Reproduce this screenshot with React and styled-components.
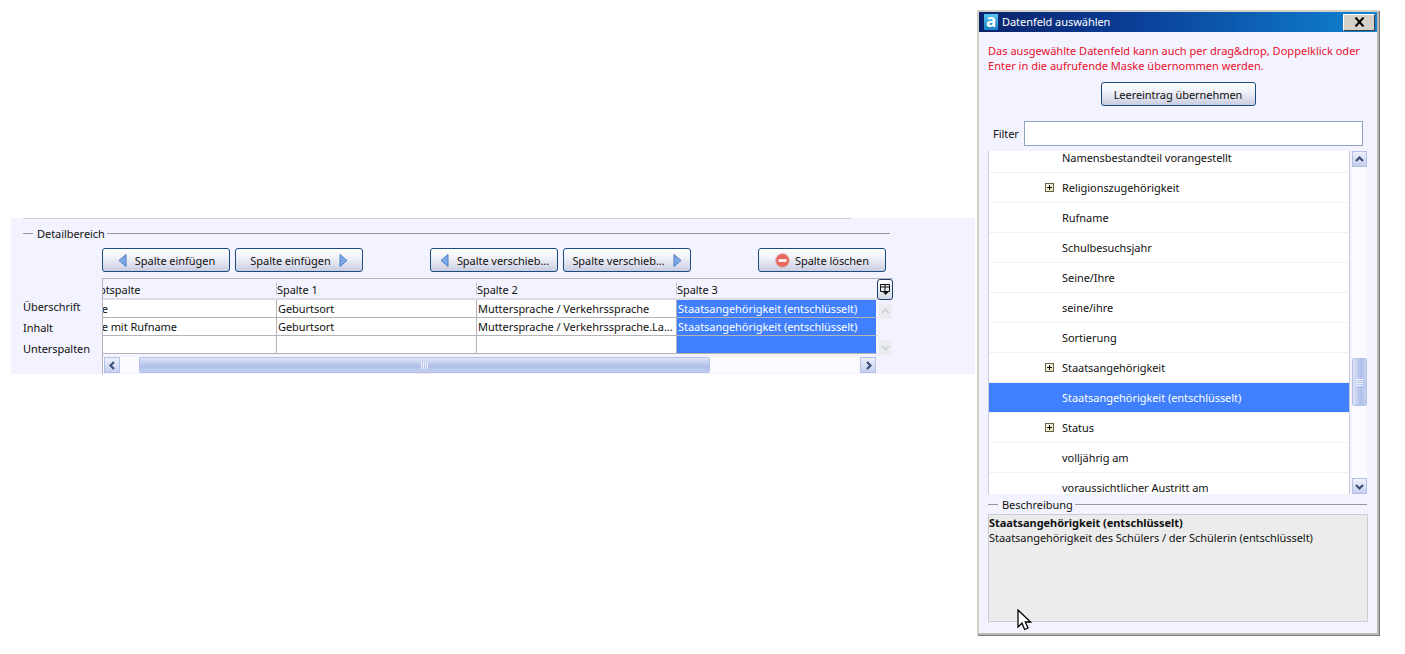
import React from "react";
import styled, { createGlobalStyle } from "styled-components";

const listItems = [
  { label: "Namensbestandteil vorangestellt" },
  { label: "Religionszugehörigkeit", expandable: true },
  { label: "Rufname" },
  { label: "Schulbesuchsjahr" },
  { label: "Seine/Ihre" },
  { label: "seine/ihre" },
  { label: "Sortierung" },
  { label: "Staatsangehörigkeit", expandable: true },
  { label: "Staatsangehörigkeit (entschlüsselt)", selected: true },
  { label: "Status", expandable: true },
  { label: "volljährig am" },
  { label: "voraussichtlicher Austritt am" },
];

const tableRows = [
  ["Name", "Geburtsort", "Muttersprache / Verkehrssprache", "Staatsangehörigkeit (entschlüsselt)"],
  ["Name mit Rufname", "Geburtsort", "Muttersprache / Verkehrssprache.La...", "Staatsangehörigkeit (entschlüsselt)"],
  ["", "", "", ""],
];

const GlobalStyle = createGlobalStyle`
  html, body {
    margin: 0;
    height: 654px;
    overflow: hidden;
    background: #fff;
  }
  body {
    font-family: "Noto Sans", "DejaVu Sans", sans-serif;
    font-size: 11px;
    letter-spacing: -0.05px;
    color: #111;
  }
`;

const Page = styled.div`
  display: flex;
  align-items: flex-start;
  gap: 2px;
  width: 1405px;
  height: 654px;
  padding: 10px 0 0 11px;
  box-sizing: border-box;
`;

/* linker Bereich */
const Panel = styled.section`
  flex: none;
  width: 964px;
  height: 156px;
  margin-top: 208px;
  background: #f2f3fe;
  display: flex;
  flex-direction: column;
`;

const TopRule = styled.div`
  width: 828px;
  height: 1px;
  margin-left: 12px;
  background: #cfd0d8;
  flex: none;
`;

const Legend = styled.div`
  display: flex;
  align-items: center;
  height: 14px;
  flex: none;
  width: ${({ $width }) => $width}px;
  margin: ${({ $margin }) => $margin};
  color: #111;

  &::before {
    content: "";
    width: 10px;
    height: 1px;
    margin-right: 4px;
    background: #999;
  }
  &::after {
    content: "";
    flex: 1;
    height: 1px;
    margin-left: 2px;
    background: #999;
  }
`;

const ButtonRow = styled.div`
  display: flex;
  margin: 8px 0 0 91px;
  flex: none;
`;

const ToolButton = styled.button`
  width: ${({ $width }) => $width || 128}px;
  height: 24px;
  margin-left: ${({ $gap }) => $gap || 0}px;
  display: flex;
  align-items: center;
  justify-content: center;
  gap: ${({ $iconGap }) => $iconGap || 8}px;
  padding: 0 0 0 ${({ $iconPad }) => $iconPad || 0}px;
  flex: none;
  font: inherit;
  letter-spacing: inherit;
  color: #111;
  border: 1px solid #1d4a7d;
  border-radius: 3px;
  background: linear-gradient(#ffffff 0%, #f0f1f8 40%, #c9cde0 100%);
`;

const Body = styled.div`
  display: flex;
  margin-top: 6px;
  flex: 1;
`;

const RowLabels = styled.div`
  width: 91px;
  flex: none;
  padding: 21px 0 0 12px;
  box-sizing: border-box;
  display: flex;
  flex-direction: column;
  gap: 6px;
  line-height: 15px;
`;

const TableArea = styled.div`
  width: 791px;
  height: 96px;
  border-top: 1px solid #b4b4b8;
  border-left: 1px solid #b4b4b8;
  box-sizing: border-box;
  display: grid;
  grid-template-columns: 774px 16px;
  grid-template-rows: 20px 56px 19px;
`;

const HeaderRow = styled.div`
  display: grid;
  grid-template-columns: 173px 200px 200px 200px;
  background: #f2f3fe;
  border-bottom: 2px solid #dcdce2;
  box-sizing: border-box;
  height: 21px;
`;

const HeaderCell = styled.div`
  overflow: hidden;
  white-space: nowrap;
  line-height: 21px;
  padding-left: ${({ $shift }) => ($shift ? 0 : 1)}px;
  position: relative;

  &::before {
    content: "";
    display: ${({ $shift }) => ($shift ? "none" : "block")};
    position: absolute;
    left: 0;
    top: 3px;
    bottom: 3px;
    width: 1px;
    background: #c8c8d0;
  }
`;

const Clipped = styled.span`
  display: inline-block;
  margin-left: ${({ $shift }) => $shift}px;
`;

const Rows = styled.div`
  grid-column: 1;
  grid-row: 2;
  margin-top: 1px;
`;

const Row = styled.div`
  display: grid;
  grid-template-columns: 173px 200px 200px 200px;
  height: 18px;
  box-sizing: border-box;
  border-bottom: 1px solid #b4b4b8;
  background: #fff;
`;

const Cell = styled.div`
  overflow: hidden;
  white-space: nowrap;
  line-height: 17px;
  padding-left: ${({ $first }) => ($first ? 0 : 1)}px;
  border-left: ${({ $first }) => ($first ? "none" : "1px solid #b4b4b8")};
  background: ${({ $selected }) => ($selected ? "#4080ff" : "#fff")};
  color: ${({ $selected }) => ($selected ? "#fff" : "#111")};
`;

const CornerButton = styled.div`
  grid-column: 2;
  grid-row: 1;
  width: 16px;
  height: 21px;
  box-sizing: border-box;
  border: 1px solid #1d3f6d;
  border-radius: 3px;
  background: linear-gradient(#fff, #d5d8e6);
  display: flex;
  align-items: center;
  justify-content: center;
`;

const VerticalTrack = styled.div`
  grid-column: 2;
  grid-row: 2;
  margin-top: 5px;
  margin-left: 2px;
  display: flex;
  flex-direction: column;
  justify-content: space-between;
  height: 51px;
  width: 13px;
`;

const DisabledArrow = styled.div`
  height: 15px;
  background: #ecedf2;
  display: flex;
  align-items: center;
  justify-content: center;
`;

const HorizontalTrack = styled.div`
  grid-column: 1;
  grid-row: 3;
  display: flex;
  align-items: stretch;
  margin-top: 2px;
  height: 16px;
  background: #fbfbff;
  padding-left: 1px;
`;

const ScrollButton = styled.div`
  flex: none;
  width: ${({ $w }) => $w || 16}px;
  height: ${({ $h }) => $h || 16}px;
  box-sizing: border-box;
  border: 1px solid #b3c0e4;
  background: linear-gradient(#eef0fb, #c5cfee);
  display: flex;
  align-items: center;
  justify-content: center;
`;

const HorizontalThumb = styled.div`
  flex: none;
  width: 571px;
  margin-left: 19px;
  margin-right: 150px;
  box-sizing: border-box;
  border: 1px solid #b3c0e4;
  border-radius: 2px;
  background: linear-gradient(#dfe5f8, #aebfea 60%, #c4d0f0);
  display: flex;
  align-items: center;
  justify-content: center;
`;

/* Dialog */
const Dialog = styled.aside`
  flex: none;
  position: relative;
  width: 402px;
  height: 625px;
  box-sizing: border-box;
  background: #f2f3fe;
  border: 2px solid #d4d0c8;
  border-right-color: #bdbab2;
  border-bottom-color: #bdbab2;
  box-shadow: 1px 1px 0 #77777a;
`;

const TitleBar = styled.header`
  height: 20px;
  display: flex;
  align-items: center;
  padding-left: 5px;
  color: #fff;
  line-height: 17px;
  background: linear-gradient(90deg, #0a246a 0%, #0a3a94 35%, #0f83d2 100%);

  & > span:last-of-type {
    margin-top: -2px;
  }
`;

const AppIcon = styled.span`
  width: 14px;
  height: 16px;
  margin-right: 4px;
  background: linear-gradient(#58c3f0, #1a82c8);
  color: #fff;
  font-weight: 700;
  font-size: 17px;
  line-height: 13px;
  text-align: center;
`;

const CloseButton = styled.div`
  margin-left: auto;
  margin-right: 2px;
  width: 32px;
  height: 17px;
  box-sizing: border-box;
  background: #d4d0c8;
  border: 1px solid;
  border-color: #fff #404040 #404040 #fff;
  display: flex;
  align-items: center;
  justify-content: center;
`;

const Notice = styled.p`
  margin: 11px 0 0 9px;
  color: #e8102c;
  line-height: 15px;
  letter-spacing: 0.02px;
`;

const CenterRow = styled.div`
  display: flex;
  justify-content: center;
  margin: 9px 0 0 0;
`;

const FilterRow = styled.label`
  display: flex;
  align-items: center;
  margin: 15px 0 0 14px;
  gap: 5px;
`;

const FilterInput = styled.input`
  width: 339px;
  height: 25px;
  box-sizing: border-box;
  border: 1px solid #8ea3c4;
  background: #fff;
  padding: 0 3px;
  font: inherit;
`;

const ListFrame = styled.div`
  display: flex;
  margin: 5px 0 0 9px;
  height: 343px;
  width: 379px;
`;

const List = styled.div`
  width: 362px;
  flex: none;
  overflow: hidden;
  background: #fff;
  border-left: 1px solid #c8ccd8;
  border-right: 1px solid #c8ccd8;
  box-sizing: border-box;
`;

const ListInner = styled.div`
  margin-top: -8px;
`;

const ListRow = styled.div`
  height: 30px;
  box-sizing: border-box;
  display: flex;
  align-items: center;
  padding-left: 73px;
  position: relative;
  border-bottom: 1px solid #f0f0f6;
  background: ${({ $selected }) => ($selected ? "#4080ff" : "#fff")};
  color: ${({ $selected }) => ($selected ? "#fff" : "#111")};
`;

const Expander = styled.span`
  position: absolute;
  left: 56px;
  top: 10px;
  width: 9px;
  height: 9px;
  box-sizing: border-box;
  border: 1px solid #6b6440;
  background: linear-gradient(135deg, #fff, #e8dfba);

  &::before, &::after {
    content: "";
    position: absolute;
    background: #111;
  }
  &::before { left: 1px; right: 1px; top: 3px; height: 1px; }
  &::after { top: 1px; bottom: 1px; left: 3px; width: 1px; }
`;

const VerticalBar = styled.div`
  width: 15px;
  margin-left: 2px;
  flex: none;
  display: flex;
  flex-direction: column;
  background: #fbfbff;
`;

const VerticalThumb = styled.div`
  width: 15px;
  height: 49px;
  margin-top: 191px;
  margin-bottom: 72px;
  box-sizing: border-box;
  border: 1px solid #b3c0e4;
  border-radius: 2px;
  background: linear-gradient(90deg, #dfe5f8, #aebfea 60%, #c4d0f0);
  display: flex;
  align-items: center;
  justify-content: center;
`;

const Description = styled.div`
  width: 380px;
  height: 108px;
  margin: 3px 0 0 9px;
  box-sizing: border-box;
  background: #ececec;
  border: 1px solid #c8ccd8;
  line-height: 15px;

  strong { display: block; }
`;

const Cursor = styled.svg`
  position: absolute;
  left: 38px;
  top: 597px;
`;

const Triangle = ({ dir }) => (
  <svg width="9" height="13" viewBox="0 0 9 13">
    <path
      d={dir === "left" ? "M8 0.5V12.5L1 6.5Z" : "M1 0.5V12.5L8 6.5Z"}
      fill="#7fa8e6"
      stroke="#4d7fc9"
      strokeWidth="1"
    />
  </svg>
);

const Chevron = ({ dir, color = "#3c5078", weight = 2.2 }) => {
  const points = {
    up: "1,6 4.5,2.5 8,6",
    down: "1,3 4.5,6.5 8,3",
    left: "6,1 2.5,4.5 6,8",
    right: "3,1 6.5,4.5 3,8",
  }[dir];
  return (
    <svg width="9" height="9" viewBox="0 0 9 9">
      <polyline points={points} fill="none" stroke={color} strokeWidth={weight} />
    </svg>
  );
};

const Grip = ({ vertical }) => (
  <svg width="7" height="7" viewBox="0 0 7 7">
    {[0.5, 2.5, 4.5, 6.5].map((p) =>
      vertical ? (
        <line key={p} x1="0" x2="7" y1={p} y2={p} stroke="#eef1fb" />
      ) : (
        <line key={p} y1="0" y2="7" x1={p} x2={p} stroke="#eef1fb" />
      )
    )}
  </svg>
);

const DeleteIcon = () => (
  <svg width="15" height="15" viewBox="0 0 15 15">
    <circle cx="7.5" cy="7.5" r="6.8" fill="#e8685c" stroke="#d8a8a0" />
    <rect x="3.5" y="6.2" width="8" height="2.6" fill="#fff" />
  </svg>
);

const ColumnsIcon = () => (
  <svg width="12" height="13" viewBox="0 0 12 13">
    <path d="M1.5 1.5H10.5V8.5H1.5ZM1.5 4H10.5M6 1.5V8.5" fill="none" stroke="#111" />
    <path d="M3.5 8.5H10L6.7 12Z" fill="#111" />
  </svg>
);

const App = () => (
  <>
    <GlobalStyle />
    <Page>
      <Panel>
        <TopRule />
        <Legend $width={867} $margin="7px 0 0 12px">
          Detailbereich
        </Legend>
        <ButtonRow>
          <ToolButton $iconGap={8} $iconPad={1}>
            <Triangle dir="left" />
            Spalte einfügen
          </ToolButton>
          <ToolButton $gap={5}>
            Spalte einfügen
            <Triangle dir="right" />
          </ToolButton>
          <ToolButton $gap={67} $iconPad={1}>
            <Triangle dir="left" />
            Spalte verschieb...
          </ToolButton>
          <ToolButton $gap={5}>
            Spalte verschieb...
            <Triangle dir="right" />
          </ToolButton>
          <ToolButton $gap={67} $iconGap={5}>
            <DeleteIcon />
            Spalte löschen
          </ToolButton>
        </ButtonRow>
        <Body>
          <RowLabels>
            <span>Überschrift</span>
            <span>Inhalt</span>
            <span>Unterspalten</span>
          </RowLabels>
          <TableArea>
            <HeaderRow>
              <HeaderCell $shift>
                <Clipped $shift={-25}>Hauptspalte</Clipped>
              </HeaderCell>
              <HeaderCell>Spalte 1</HeaderCell>
              <HeaderCell>Spalte 2</HeaderCell>
              <HeaderCell>Spalte 3</HeaderCell>
            </HeaderRow>
            <CornerButton>
              <ColumnsIcon />
            </CornerButton>
            <Rows>
              {tableRows.map((row, r) => (
                <Row key={r}>
                  {row.map((text, c) => (
                    <Cell key={c} $first={c === 0} $selected={c === 3}>
                      {c === 0 ? <Clipped $shift={-26}>{text}</Clipped> : text}
                    </Cell>
                  ))}
                </Row>
              ))}
            </Rows>
            <VerticalTrack>
              <DisabledArrow>
                <Chevron dir="up" color="#d2d4dc" />
              </DisabledArrow>
              <DisabledArrow>
                <Chevron dir="down" color="#d2d4dc" />
              </DisabledArrow>
            </VerticalTrack>
            <HorizontalTrack>
              <ScrollButton>
                <Chevron dir="left" />
              </ScrollButton>
              <HorizontalThumb>
                <Grip />
              </HorizontalThumb>
              <ScrollButton>
                <Chevron dir="right" />
              </ScrollButton>
            </HorizontalTrack>
          </TableArea>
        </Body>
      </Panel>

      <Dialog>
        <TitleBar>
          <AppIcon>a</AppIcon>
          <span>Datenfeld auswählen</span>
          <CloseButton>
            <svg width="11" height="10" viewBox="0 0 11 10">
              <path d="M1.5 0.5L9.5 9.5M9.5 0.5L1.5 9.5" stroke="#000" strokeWidth="2" />
            </svg>
          </CloseButton>
        </TitleBar>
        <Notice>
          Das ausgewählte Datenfeld kann auch per drag&amp;drop, Doppelklick oder
          <br />
          Enter in die aufrufende Maske übernommen werden.
        </Notice>
        <CenterRow>
          <ToolButton $width={155}>Leereintrag übernehmen</ToolButton>
        </CenterRow>
        <FilterRow>
          Filter
          <FilterInput />
        </FilterRow>
        <ListFrame>
          <List>
            <ListInner>
              {listItems.map((item) => (
                <ListRow key={item.label} $selected={item.selected}>
                  {item.expandable && <Expander />}
                  {item.label}
                </ListRow>
              ))}
            </ListInner>
          </List>
          <VerticalBar>
            <ScrollButton $w={15}>
              <Chevron dir="up" />
            </ScrollButton>
            <VerticalThumb>
              <Grip vertical />
            </VerticalThumb>
            <ScrollButton $w={15}>
              <Chevron dir="down" />
            </ScrollButton>
          </VerticalBar>
        </ListFrame>
        <Legend $width={379} $margin="3px 0 0 9px">
          Beschreibung
        </Legend>
        <Description>
          <strong>Staatsangehörigkeit (entschlüsselt)</strong>
          Staatsangehörigkeit des Schülers / der Schülerin (entschlüsselt)
        </Description>
        <Cursor width="15" height="23" viewBox="0 0 15 23">
          <path
            d="M1 1V18L5 14.2L7.6 20.5L11 19L8.3 13H13.5Z"
            fill="#fff"
            stroke="#000"
            strokeWidth="1.3"
          />
        </Cursor>
      </Dialog>
    </Page>
  </>
);

export default App;
